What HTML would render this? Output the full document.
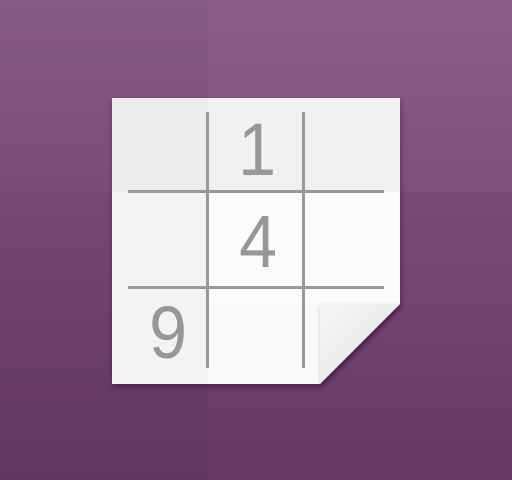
<!DOCTYPE html>
<html><head><style>
html,body{margin:0;padding:0;}
body{width:512px;height:480px;overflow:hidden;position:relative;background:linear-gradient(#8a5e87,#6a3e66);}
</style></head><body>
<svg width="512" height="480" style="position:absolute;left:0;top:0">
<defs>
<linearGradient id="bg" x1="0" y1="0" x2="0" y2="1">
<stop offset="0" stop-color="#8b5e88"/><stop offset="0.4" stop-color="#7f5079"/><stop offset="0.4" stop-color="#7a4a75"/><stop offset="1" stop-color="#653962"/>
</linearGradient>
<linearGradient id="fold" x1="0" y1="0" x2="1" y2="1">
<stop offset="0" stop-color="#f6f6f6"/><stop offset="1" stop-color="#e2e2e2"/>
</linearGradient>
<filter id="sh" x="-10%" y="-10%" width="130%" height="130%"><feDropShadow dx="1" dy="3" stdDeviation="3" flood-color="#2a0a28" flood-opacity="0.45"/></filter>
</defs>
<rect width="512" height="480" fill="url(#bg)"/>
<rect x="0" y="0" width="208" height="480" fill="#000" opacity="0.03"/>
<polygon points="112,98 400,98 400,304 320,384 112,384" fill="#fafafa" filter="url(#sh)"/>
<rect x="112" y="98" width="288" height="94" fill="#ededed"/>
<rect x="208" y="98" width="192" height="94" fill="#f1f1f1"/>
<rect x="112" y="192" width="96" height="192" fill="#f3f3f3"/>
<rect x="208" y="192" width="192" height="112" fill="#fbfbfb"/>
<g fill="#999">
<rect x="206" y="112" width="3" height="256"/>
<rect x="302" y="112" width="3" height="256"/>
<rect x="128" y="190" width="256" height="3"/>
<rect x="128" y="286" width="256" height="3"/>
</g>
<polygon points="320,304 400,304 320,384" fill="url(#fold)" style="filter:drop-shadow(1px 2px 2px rgba(0,0,0,0.25))"/>
<g font-family="Liberation Sans, sans-serif" font-size="74" fill="#979797" text-anchor="middle">
<text transform="translate(257,175) scale(0.92,1)">1</text>
<text transform="translate(258,267) scale(0.92,1)">4</text>
<text transform="translate(168,358) scale(0.92,1)">9</text>
</g>
</svg>
</body></html>
